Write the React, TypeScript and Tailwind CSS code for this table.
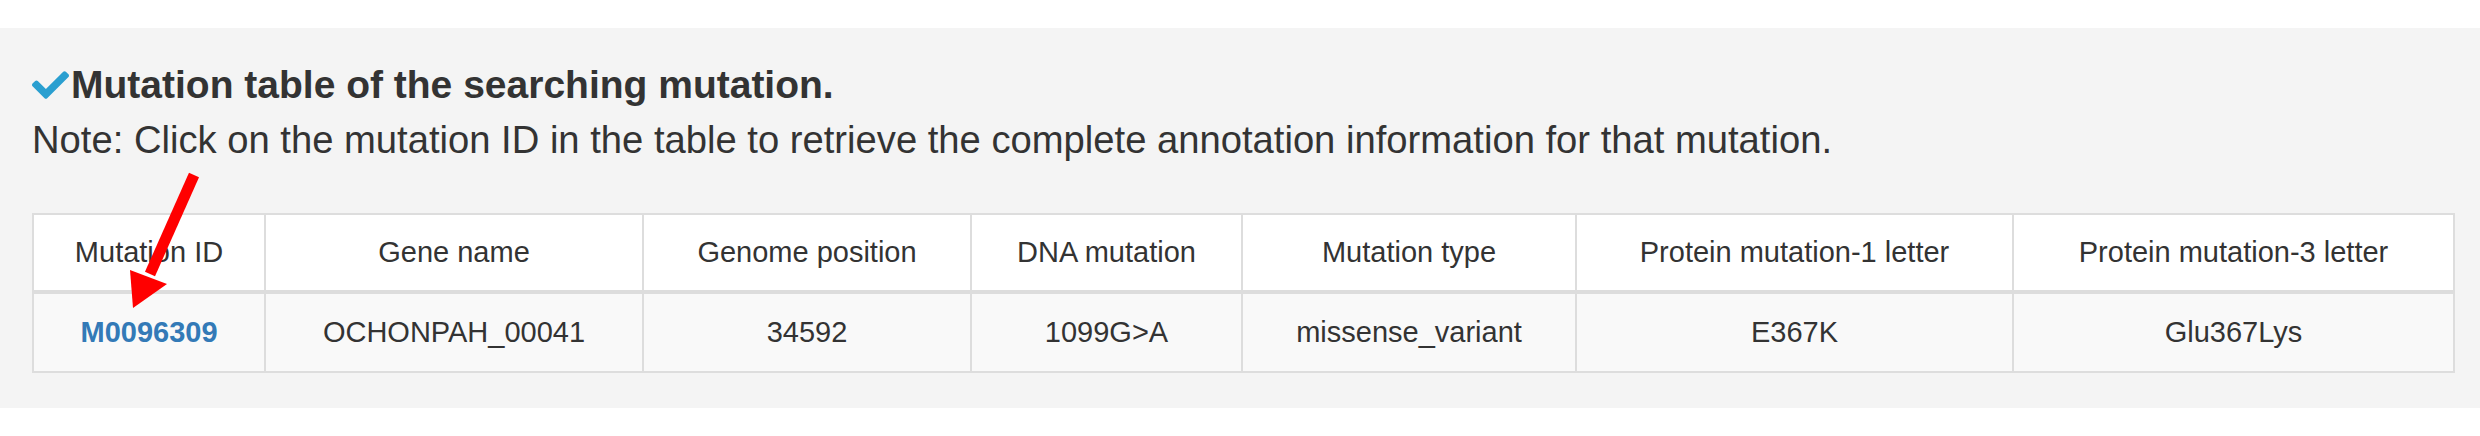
const headers = [
  "Mutation ID",
  "Gene name",
  "Genome position",
  "DNA mutation",
  "Mutation type",
  "Protein mutation-1 letter",
  "Protein mutation-3 letter",
]

const row = {
  id: "M0096309",
  gene: "OCHONPAH_00041",
  position: "34592",
  dna: "1099G>A",
  type: "missense_variant",
  protein1: "E367K",
  protein3: "Glu367Lys",
}

function CheckIcon() {
  return (
    <svg viewBox="0 66 512 380" className="mr-[2px] h-[28px] w-[37px] shrink-0 fill-[#2a9fd0]">
      <path d="M173.898 439.404l-166.4-166.4c-9.997-9.997-9.997-26.206 0-36.204l36.203-36.204c9.997-9.998 26.207-9.998 36.204 0L192 312.69 432.095 72.596c9.997-9.997 26.207-9.997 36.204 0l36.203 36.204c9.997 9.997 9.997 26.206 0 36.204l-294.4 294.401c-9.998 9.997-26.207 9.997-36.204-.001z" />
    </svg>
  )
}

export default function App() {
  return (
    <div className="relative h-[436px] w-[2480px] bg-white pt-[28px] font-['Liberation_Sans',Arial,sans-serif] text-[#333]">
      <div className="bg-[#f4f4f4] pb-[35px] pl-8 pr-[27px] pt-[36px]">
        <h4 className="flex items-center text-[39px] font-bold leading-[42px]">
          <CheckIcon />
          Mutation table of the searching mutation.
        </h4>
        <p className="mt-[7px] text-[38.2px] leading-[54px]">
          Note: Click on the mutation ID in the table to retrieve the complete annotation information for that mutation.
        </p>

        <table className="mt-[46px] w-[2421px] table-fixed border-collapse border-2 border-[#ddd] text-center text-[29px]">
          <colgroup>
            <col className="w-[232px]" />
            <col className="w-[378px]" />
            <col className="w-[328px]" />
            <col className="w-[271px]" />
            <col className="w-[334px]" />
            <col className="w-[437px]" />
            <col className="w-[441px]" />
          </colgroup>
          <thead>
            <tr className="bg-white">
              {headers.map(h => (
                <th key={h} className="h-[78px] border-2 border-b-4 border-[#ddd] p-0 align-middle font-normal">
                  {h}
                </th>
              ))}
            </tr>
          </thead>
          <tbody>
            <tr className="bg-[#f9f9f9]">
              <td className="h-[80px] border-2 border-[#ddd] p-0 align-middle">
                <a href="#" className="font-bold text-[#337ab7]">{row.id}</a>
              </td>
              <td className="border-2 border-[#ddd] p-0 align-middle">{row.gene}</td>
              <td className="border-2 border-[#ddd] p-0 align-middle">{row.position}</td>
              <td className="border-2 border-[#ddd] p-0 align-middle">{row.dna}</td>
              <td className="border-2 border-[#ddd] p-0 align-middle">{row.type}</td>
              <td className="border-2 border-[#ddd] p-0 align-middle">{row.protein1}</td>
              <td className="border-2 border-[#ddd] p-0 align-middle">{row.protein3}</td>
            </tr>
          </tbody>
        </table>
      </div>

      {/* red annotation arrow pointing at the mutation ID */}
      <svg className="pointer-events-none absolute left-0 top-0" width="2480" height="436">
        <line x1="194" y1="175" x2="150" y2="274" stroke="#ff0000" strokeWidth="11" />
        <polygon points="133,308 130,270 167,284" fill="#ff0000" />
      </svg>
    </div>
  )
}
